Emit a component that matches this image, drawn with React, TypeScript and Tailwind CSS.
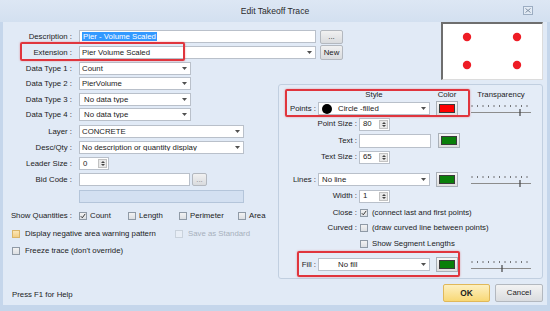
import type { ReactNode } from "react";

function Arrow() {
  return (
    <svg width="5" height="3" viewBox="0 0 5 3">
      <path d="M0 0h5L2.5 3z" fill="#505050" />
    </svg>
  );
}

function Combo({ w, children }: { w: string; children?: ReactNode }) {
  return (
    <div className={`h-[13px] bg-white border border-[#b9c0ca] flex items-center ${w}`}>
      <div className="flex-1 flex items-center whitespace-nowrap overflow-hidden leading-none">
        {children}
      </div>
      <div className="w-[12px] h-full flex items-center justify-center">
        <Arrow />
      </div>
    </div>
  );
}

function Spinner({ value, w = "w-[31px]" }: { value: string; w?: string }) {
  return (
    <div className={`h-[13px] bg-white border border-[#b9c0ca] flex items-center ${w}`}>
      <span className="flex-1 pl-[3px] leading-none">{value}</span>
      <div className="w-[9px] h-[9px] mr-[1px] bg-[#e8e8e8] border border-[#c2c2c2] flex flex-col items-center justify-center gap-[1px]">
        <svg width="4" height="2" viewBox="0 0 4 2">
          <path d="M0 2h4L2 0z" fill="#444" />
        </svg>
        <svg width="4" height="2" viewBox="0 0 4 2">
          <path d="M0 0h4L2 2z" fill="#444" />
        </svg>
      </div>
    </div>
  );
}

function Check({ checked, tone = "normal" }: { checked?: boolean; tone?: "normal" | "warm" | "off" }) {
  const look =
    tone === "warm"
      ? "border-[#d9b56b] bg-gradient-to-b from-[#fbe6b6] to-[#f3cf86]"
      : tone === "off"
        ? "border-[#c9d2dc] bg-[#e8eef6]"
        : "border-[#8f9aa6] bg-gradient-to-b from-[#f2f2f2] to-[#dcdfe3]";
  return (
    <div className={`w-[8px] h-[8px] border shrink-0 flex items-center justify-center ${look}`}>
      {checked && (
        <svg width="6" height="6" viewBox="0 0 6 6">
          <path d="M0.8 3.2L2.3 4.8L5.2 0.9" fill="none" stroke="#3a3a3a" strokeWidth="1" />
        </svg>
      )}
    </div>
  );
}

function Swatch({ color }: { color: string }) {
  return (
    <div className="w-[22px] h-[15px] border border-[#a9b0b8] bg-gradient-to-b from-[#f6f6f6] to-[#dedede] flex items-center justify-center">
      <div className={`w-[16px] h-[9px] border border-[#3a3a3a] ${color}`} />
    </div>
  );
}

function Slider({ thumb }: { thumb: number }) {
  const ticks = Array.from({ length: 11 }, (_, i) => 2 + i * 5.5);
  return (
    <svg width="62" height="15" viewBox="0 0 62 15">
      {ticks.map((x) => (
        <line key={x} x1={x} y1="3" x2={x} y2="5" stroke="#555" strokeWidth="0.8" />
      ))}
      <line x1="1" y1="10.5" x2="61" y2="10.5" stroke="#8c8c8c" strokeWidth="1" />
      <line x1={thumb} y1="7" x2={thumb} y2="14" stroke="#444" strokeWidth="1.2" />
    </svg>
  );
}

function Btn({ w, h = "h-[14px]", children }: { w: string; h?: string; children: ReactNode }) {
  return (
    <div
      className={`${w} ${h} border border-[#b3b8bf] rounded-[2px] bg-gradient-to-b from-[#f1f1f1] to-[#d9dbde] flex items-center justify-center leading-none shrink-0`}
    >
      {children}
    </div>
  );
}

function LRow({ label, mt, children }: { label?: string; mt: string; children: ReactNode }) {
  return (
    <div className={`flex items-center h-[15px] ${mt}`}>
      <div className="w-[69px] shrink-0 text-right whitespace-nowrap leading-none">
        {label ? `${label} :` : ""}
      </div>
      <div className="ml-[7px] flex items-center shrink-0">{children}</div>
    </div>
  );
}

export default function App() {
  return (
    <div className="relative w-[550px] h-[311px] overflow-hidden bg-[#c5d6eb] font-['Liberation_Sans',Arial,sans-serif] text-[7.8px] text-[#1b1b1b] flex flex-col">
      {/* Title bar */}
      <div className="h-[22px] shrink-0 bg-gradient-to-b from-[#dde7f4] to-[#d3e0f0] flex items-center justify-center relative">
        <span className="text-[8.6px] text-[#2b2b2b]">Edit Takeoff Trace</span>
        <div className="absolute right-[17px] top-[6px] w-[10px] h-[9px] border border-[#9cadc2] bg-[#e3ebf5] flex items-center justify-center">
          <svg width="6" height="5" viewBox="0 0 6 5">
            <path d="M0.5 0.5L5.5 4.5M5.5 0.5L0.5 4.5" stroke="#7f8fa3" strokeWidth="1" />
          </svg>
        </div>
      </div>

      {/* Body */}
      <div className="mx-[3px] h-[283px] bg-[#e1eaf6] flex">
        {/* Left column */}
        <div className="w-[275px] shrink-0 flex flex-col pt-[7px]">
          <LRow label="Description" mt="mt-0">
            <div className="w-[237px] h-[13px] bg-white border border-[#b9c0ca] flex items-center pl-[2px]">
              <span className="bg-[#3399ff] text-white leading-none px-[1px] py-[1px]">Pier - Volume Scaled</span>
            </div>
            <div className="ml-[4px]">
              <Btn w="w-[23px]">...</Btn>
            </div>
          </LRow>
          <LRow label="Extension" mt="mt-[1px]">
            <Combo w="w-[237px]">
              <span className="pl-[2px]">Pier Volume Scaled</span>
            </Combo>
            <div className="ml-[4px]">
              <Btn w="w-[23px]" h="h-[15px]">New</Btn>
            </div>
          </LRow>
          <LRow label="Data Type 1" mt="mt-[1px]">
            <Combo w="w-[112px]">
              <span className="pl-[2px]">Count</span>
            </Combo>
          </LRow>
          <LRow label="Data Type 2" mt="mt-0">
            <Combo w="w-[112px]">
              <span className="pl-[2px]">PierVolume</span>
            </Combo>
          </LRow>
          <LRow label="Data Type 3" mt="mt-[1px]">
            <Combo w="w-[112px]">
              <span className="pl-[4px]">No data type</span>
            </Combo>
          </LRow>
          <LRow label="Data Type 4" mt="mt-0">
            <Combo w="w-[112px]">
              <span className="pl-[4px]">No data type</span>
            </Combo>
          </LRow>
          <LRow label="Layer" mt="mt-[2px]">
            <Combo w="w-[165px]">
              <span className="pl-[2px]">CONCRETE</span>
            </Combo>
          </LRow>
          <LRow label="Desc/Qty" mt="mt-[1px]">
            <Combo w="w-[165px]">
              <span className="pl-[2px]">No description or quantity display</span>
            </Combo>
          </LRow>
          <LRow label="Leader Size" mt="mt-[1px]">
            <Spinner value="0" w="w-[30px]" />
          </LRow>
          <LRow label="Bid Code" mt="mt-[1px]">
            <div className="w-[111px] h-[13px] bg-white border border-[#b9c0ca]" />
            <div className="ml-[2px]">
              <Btn w="w-[15px]" h="h-[13px]">
                <span className="text-[#888]">...</span>
              </Btn>
            </div>
          </LRow>
          <LRow mt="mt-[2px]">
            <div className="w-[165px] h-[13px] bg-[#d3e0f1] border border-[#b4c5da]" />
          </LRow>

          <div className="flex items-center h-[15px] mt-[4px]">
            <div className="w-[69px] shrink-0 text-right whitespace-nowrap leading-none">Show Quantities :</div>
            <div className="ml-[7px] flex items-center">
              <div className="w-[49px] flex items-center gap-[3px]">
                <Check checked />
                <span className="leading-none">Count</span>
              </div>
              <div className="w-[51px] flex items-center gap-[3px]">
                <Check />
                <span className="leading-none">Length</span>
              </div>
              <div className="w-[59px] flex items-center gap-[3px]">
                <Check />
                <span className="leading-none">Perimeter</span>
              </div>
              <div className="flex items-center gap-[3px]">
                <Check />
                <span className="leading-none">Area</span>
              </div>
            </div>
          </div>

          <div className="flex items-center h-[15px] mt-[3px] pl-[9px]">
            <div className="w-[163px] flex items-center gap-[5px]">
              <Check tone="warm" />
              <span className="leading-none whitespace-nowrap">Display negative area warning pattern</span>
            </div>
            <div className="flex items-center gap-[5px]">
              <Check tone="off" />
              <span className="leading-none text-[#a7b0bc] whitespace-nowrap">Save as Standard</span>
            </div>
          </div>

          <div className="flex items-center h-[15px] mt-[2px] pl-[9px] gap-[5px]">
            <Check />
            <span className="leading-none">Freeze trace (don't override)</span>
          </div>

          <div className="flex items-center h-[15px] mt-[29px] pl-[9px]">
            <span className="leading-none">Press F1 for Help</span>
          </div>
        </div>

        {/* Right column */}
        <div className="flex-1 flex flex-col pr-[4px]">
          <div className="self-end w-[102px] h-[58px] bg-white border-t-2 border-l-2 border-[#6e6e6e] border-r border-b border-r-[#dcdcdc] border-b-[#dcdcdc]">
            <svg width="100" height="56" viewBox="0 0 100 56">
              {[
                [24, 13],
                [74, 13],
                [24, 41],
                [74, 41],
              ].map(([x, y]) => (
                <circle key={`${x}-${y}`} cx={x} cy={y} r="4.2" fill="#ee1c25" />
              ))}
            </svg>
          </div>

          {/* Group box */}
          <div className="mt-[4px] h-[195px] border border-[#c1cfe0] rounded-[3px] bg-[#e4ecf7] flex flex-col pt-[3px]">
            <div className="flex items-center h-[13px]">
              <div className="w-[39px]" />
              <div className="w-[112px] text-center leading-none">Style</div>
              <div className="ml-[6px] w-[22px] text-center leading-none">Color</div>
              <div className="ml-[12px] w-[62px] text-center leading-none">Transparency</div>
            </div>
            <div className="flex items-center h-[15px]">
              <div className="w-[37px] text-right leading-none whitespace-nowrap">Points :</div>
              <div className="ml-[2px]">
                <Combo w="w-[112px]">
                  <div className="ml-[3px] w-[10px] h-[10px] rounded-full bg-black shrink-0" />
                  <span className="ml-[6px]">Circle -filled</span>
                </Combo>
              </div>
              <div className="ml-[6px]">
                <Swatch color="bg-[#ff0000]" />
              </div>
              <div className="ml-[12px] mt-[1px]">
                <Slider thumb={50} />
              </div>
            </div>
            <div className="flex items-center h-[14px] mt-[1px]">
              <div className="w-[78px] text-right leading-none whitespace-nowrap">Point Size :</div>
              <div className="ml-[2px]">
                <Spinner value="80" />
              </div>
            </div>
            <div className="flex items-center h-[15px] mt-[2px]">
              <div className="w-[78px] text-right leading-none whitespace-nowrap">Text :</div>
              <div className="ml-[2px] w-[72px] h-[14px] bg-white border border-[#b9c0ca]" />
              <div className="ml-[7px]">
                <Swatch color="bg-[#0a7f0a]" />
              </div>
            </div>
            <div className="flex items-center h-[14px] mt-[2px]">
              <div className="w-[78px] text-right leading-none whitespace-nowrap">Text Size :</div>
              <div className="ml-[2px]">
                <Spinner value="65" />
              </div>
            </div>
            <div className="flex items-center h-[15px] mt-[8px]">
              <div className="w-[37px] text-right leading-none whitespace-nowrap">Lines :</div>
              <div className="ml-[2px]">
                <Combo w="w-[112px]">
                  <span className="pl-[3px]">No line</span>
                </Combo>
              </div>
              <div className="ml-[6px]">
                <Swatch color="bg-[#0a7f0a]" />
              </div>
              <div className="ml-[12px] mt-[1px]">
                <Slider thumb={50} />
              </div>
            </div>
            <div className="flex items-center h-[14px] mt-[2px]">
              <div className="w-[78px] text-right leading-none whitespace-nowrap">Width :</div>
              <div className="ml-[2px]">
                <Spinner value="1" />
              </div>
            </div>
            <div className="flex items-center h-[14px] mt-[3px]">
              <div className="w-[78px] text-right leading-none whitespace-nowrap">Close :</div>
              <div className="ml-[3px] flex items-center gap-[4px]">
                <Check checked />
                <span className="leading-none whitespace-nowrap">(connect last and first points)</span>
              </div>
            </div>
            <div className="flex items-center h-[14px] mt-[1px]">
              <div className="w-[78px] text-right leading-none whitespace-nowrap">Curved :</div>
              <div className="ml-[3px] flex items-center gap-[4px]">
                <Check />
                <span className="leading-none whitespace-nowrap">(draw curved line between points)</span>
              </div>
            </div>
            <div className="flex items-center h-[14px] mt-[2px] pl-[81px] gap-[4px]">
              <Check />
              <span className="leading-none whitespace-nowrap">Show Segment Lengths</span>
            </div>
            <div className="flex items-center h-[15px] mt-[6px]">
              <div className="w-[37px] text-right leading-none whitespace-nowrap">Fill :</div>
              <div className="ml-[2px]">
                <Combo w="w-[112px]">
                  <span className="pl-[19px]">No fill</span>
                </Combo>
              </div>
              <div className="ml-[6px]">
                <Swatch color="bg-[#0a7f0a]" />
              </div>
              <div className="ml-[12px] mt-[1px]">
                <Slider thumb={32} />
              </div>
            </div>
          </div>

          <div className="mt-[5px] flex justify-end gap-[5px]">
            <div className="w-[47px] h-[18px] border border-[#e0b85a] rounded-[2px] bg-gradient-to-b from-[#fdf0c0] to-[#f8d874] flex items-center justify-center font-bold text-[8.4px] leading-none">
              OK
            </div>
            <div className="w-[48px] h-[18px] border border-[#b3b8bf] rounded-[2px] bg-gradient-to-b from-[#f3f3f3] to-[#dadcdf] flex items-center justify-center leading-none">
              Cancel
            </div>
          </div>
        </div>
      </div>

      {/* Red annotation boxes */}
      <div className="absolute left-[20px] top-[42px] w-[165px] h-[19px] border-2 border-[#e0353d] rounded-[2px] shadow-[0_0_2px_rgba(224,53,61,0.5)]" />
      <div className="absolute left-[285px] top-[89px] w-[185px] h-[28px] border-2 border-[#e0353d] rounded-[2px] shadow-[0_0_2px_rgba(224,53,61,0.5)]" />
      <div className="absolute left-[297px] top-[251px] w-[163px] h-[26px] border-2 border-[#e0353d] rounded-[2px] shadow-[0_0_2px_rgba(224,53,61,0.5)]" />
    </div>
  );
}
